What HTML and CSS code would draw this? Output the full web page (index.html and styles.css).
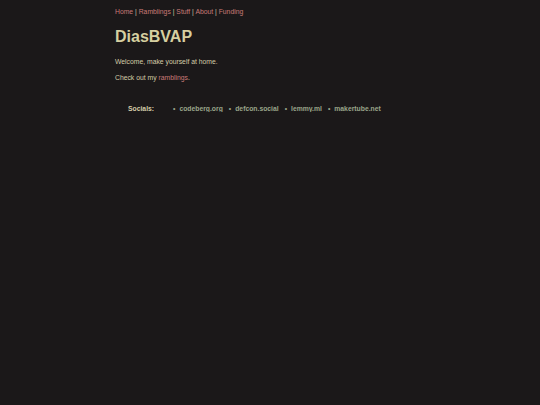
FILE: index.html
```html
<!DOCTYPE html>
<html>
<head>
<meta charset="utf-8">
<link rel="stylesheet" href="styles.css">
</head>
<body>
<main class="page">
  <nav class="nav">
    <a href="#">Home</a> | <a href="#">Ramblings</a> | <a href="#">Stuff</a> | <a href="#">About</a> | <a href="#">Funding</a>
  </nav>
  <h1 class="title">DiasBVAP</h1>
  <p class="text">Welcome, make yourself at home.</p>
  <p class="text">Check out my <a href="#">ramblings</a>.</p>
  <div class="socials">
    <span class="socials-label">Socials:</span>
    <ul class="socials-list">
      <li><a href="#">codeberg.org</a></li>
      <li><a href="#">defcon.social</a></li>
      <li><a href="#">lemmy.ml</a></li>
      <li><a href="#">makertube.net</a></li>
    </ul>
  </div>
</main>
</body>
</html>
```
FILE: styles.css
```css
html, body {
  margin: 0;
  padding: 0;
  background: #1b1819;
}
body {
  font-family: "Liberation Sans", Arial, sans-serif;
  color: #d4cca8;
  font-size: 6.8px;
}
.page {
  width: 310px;
  margin: 0 auto;
  padding-top: 7px;
}
a {
  color: #c97b78;
  text-decoration: none;
}
.nav {
  line-height: 10px;
  color: #d4cca8;
}
.title {
  font-size: 16px;
  font-weight: 700;
  margin: 11px 0 0 0;
  line-height: 18px;
  color: #d6cfa0;
}
.text {
  margin: 11px 0 0 0;
  line-height: 10px;
}
.text + .text {
  margin-top: 6px;
}
.socials {
  display: flex;
  align-items: center;
  margin-top: 22px;
  padding-left: 13px;
  font-weight: 700;
}
.socials-label {
  width: 45px;
}
.socials-list {
  display: flex;
  list-style: none;
  margin: 0;
  padding: 0;
  gap: 6px;
}
.socials-list li::before {
  content: "\2022";
  color: #9aa58a;
  margin-right: 4px;
}
.socials-list a {
  color: #9aa58a;
}
```
